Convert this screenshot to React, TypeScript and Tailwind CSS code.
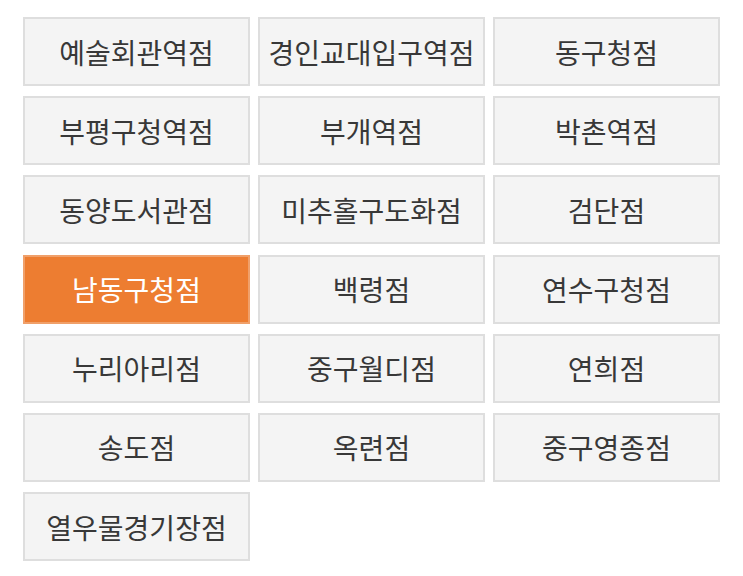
const stores = [
  "예술회관역점",
  "경인교대입구역점",
  "동구청점",
  "부평구청역점",
  "부개역점",
  "박촌역점",
  "동양도서관점",
  "미추홀구도화점",
  "검단점",
  "남동구청점",
  "백령점",
  "연수구청점",
  "누리아리점",
  "중구월디점",
  "연희점",
  "송도점",
  "옥련점",
  "중구영종점",
  "열우물경기장점",
];

const ACTIVE = "남동구청점";

export default function App() {
  return (
    <div
      className="w-[743px] h-[576px] bg-white pt-[17px] pl-[23px]"
      style={{ fontFamily: '"Noto Sans CJK KR", "Noto Sans", sans-serif' }}
    >
      <div className="grid grid-cols-[227px_227px_227px] gap-x-[8px] gap-y-[10.2px]">
        {stores.map((name) => {
          const active = name === ACTIVE;
          return (
            <button
              key={name}
              className={
                active
                  ? "h-[69px] flex items-center justify-center border-2 border-[#f0a06a] bg-[#ed7d31] text-white text-[28px]"
                  : "h-[69px] flex items-center justify-center border-2 border-[#dedede] bg-[#f4f4f4] text-[#383838] text-[28px]"
              }
            >
              {name}
            </button>
          );
        })}
      </div>
    </div>
  );
}
